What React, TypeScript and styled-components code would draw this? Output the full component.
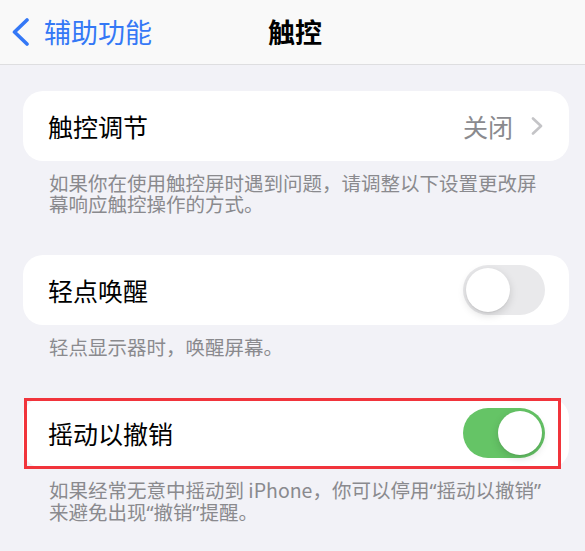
import styled, { createGlobalStyle } from 'styled-components'

const GlobalStyle = createGlobalStyle`
  html, body {
    margin: 0;
    padding: 0;
    background: #f2f2f7;
  }
  body {
    font-family: "Noto Sans CJK SC", "Noto Sans", sans-serif;
    -webkit-font-smoothing: antialiased;
  }
`

const Page = styled.div`
  min-height: 551px;
  background: #f2f2f7;
`

const NavBar = styled.header`
  display: grid;
  grid-template-columns: 1fr auto 1fr;
  align-items: center;
  height: 64px;
  background: #f9f9f9;
  border-bottom: 1px solid #dedee0;
`

const BackButton = styled.button`
  display: flex;
  align-items: center;
  gap: 15px;
  justify-self: start;
  padding: 0 0 0 12px;
  border: none;
  background: none;
  color: #3478f6;
  font-family: inherit;
  font-size: 27px;
  line-height: 36px;
`

const Title = styled.h1`
  margin: 0 0 0 5px;
  font-size: 27px;
  font-weight: 700;
  line-height: 36px;
  color: #000;
`

const Content = styled.main`
  display: flex;
  flex-direction: column;
  gap: 41px;
  padding: 26px 16px 0 23px;
`

const Section = styled.section`
  display: flex;
  flex-direction: column;
`

const Card = styled.div<{ $padRight: number }>`
  position: relative;
  display: flex;
  align-items: center;
  justify-content: space-between;
  height: 70px;
  padding: 0 ${(p) => p.$padRight}px 0 25px;
  background: #fff;
  border-radius: 20px;
`

const Label = styled.span`
  font-size: 25px;
  line-height: 34px;
  color: #000;
`

const Value = styled.span`
  display: flex;
  align-items: center;
  gap: 18px;
  font-size: 25px;
  line-height: 34px;
  color: #8a8a8e;
`

const Footer = styled.p`
  margin: 0;
  padding: 11px 0 0 26px;
  width: 500px;
  font-size: 19.5px;
  line-height: 21px;
  color: #8a8a8e;
`

// narrow, Latin-style quotation marks as in the iOS font
const Quote = styled.span`
  font-family: "Noto Sans", "Liberation Sans", sans-serif;
`

const Track = styled.div<{ $on: boolean }>`
  display: flex;
  justify-content: ${(p) => (p.$on ? 'flex-end' : 'flex-start')};
  align-items: center;
  box-sizing: border-box;
  width: 82px;
  height: 50px;
  padding: 3px;
  border-radius: 25px;
  background: ${(p) => (p.$on ? '#65c466' : '#e9e9eb')};
`

const Knob = styled.div`
  width: 44px;
  height: 44px;
  border-radius: 50%;
  background: #fff;
  box-shadow: 0 3px 8px rgba(0, 0, 0, 0.15), 0 1px 1px rgba(0, 0, 0, 0.06);
`

const Highlight = styled.div`
  position: absolute;
  top: 0;
  left: 1px;
  width: 537px;
  height: 71px;
  box-sizing: border-box;
  border: 3.5px solid #f1343b;
  pointer-events: none;
`

function Switch({ on }: { on: boolean }) {
  return (
    <Track $on={on}>
      <Knob />
    </Track>
  )
}

function Quoted({ children }: { children: string }) {
  return (
    <>
      <Quote>“</Quote>
      {children}
      <Quote>”</Quote>
    </>
  )
}

function BackChevron() {
  return (
    <svg width="17" height="28" viewBox="0 0 17 28" fill="none">
      <path
        d="M15 2 L2.5 14 L15 26"
        stroke="#3478f6"
        strokeWidth="3.6"
        strokeLinecap="round"
        strokeLinejoin="round"
      />
    </svg>
  )
}

function DisclosureChevron() {
  return (
    <svg width="12" height="18" viewBox="0 0 12 18" fill="none">
      <path
        d="M2 1.5 L10 9 L2 16.5"
        stroke="#c4c4c7"
        strokeWidth="2.6"
        strokeLinecap="round"
        strokeLinejoin="round"
      />
    </svg>
  )
}

export default function App() {
  return (
    <Page lang="zh-CN">
      <GlobalStyle />
      <NavBar>
        <BackButton>
          <BackChevron />
          辅助功能
        </BackButton>
        <Title>触控</Title>
        <span />
      </NavBar>

      <Content>
        <Section>
          <Card $padRight={26}>
            <Label>触控调节</Label>
            <Value>
              关闭
              <DisclosureChevron />
            </Value>
          </Card>
          <Footer>
            如果你在使用触控屏时遇到问题，请调整以下设置更改屏幕响应触控操作的方式。
          </Footer>
        </Section>

        <Section>
          <Card $padRight={24}>
            <Label>轻点唤醒</Label>
            <Switch on={false} />
          </Card>
          <Footer>轻点显示器时，唤醒屏幕。</Footer>
        </Section>

        <Section>
          <Card $padRight={24}>
            <Label>摇动以撤销</Label>
            <Switch on />
            <Highlight />
          </Card>
          <Footer>
            如果经常无意中摇动到 iPhone，你可以停用<Quoted>摇动以撤销</Quoted>
            来避免出现<Quoted>撤销</Quoted>提醒。
          </Footer>
        </Section>
      </Content>
    </Page>
  )
}
